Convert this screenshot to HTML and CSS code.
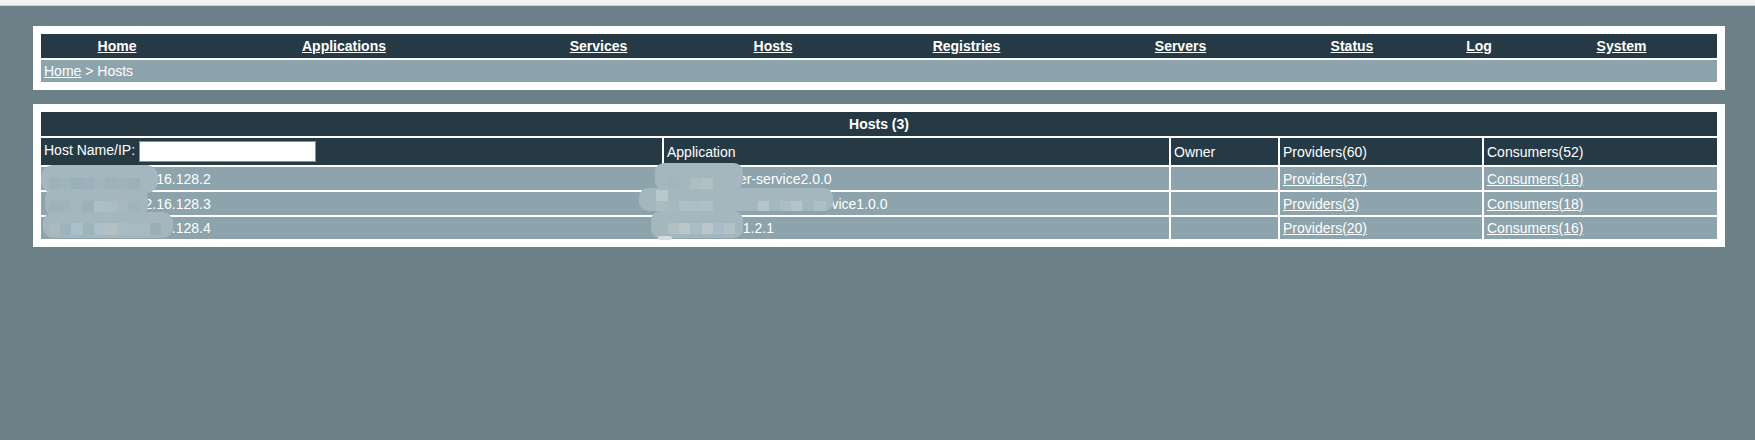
FILE: index.html
```html
<!DOCTYPE html>
<html lang="en">
<head>
<meta charset="utf-8">
<title>Hosts</title>
<link rel="stylesheet" href="styles.css">
</head>
<body>
<div class="topstrip"></div>
<main class="page">
  <section class="panel">
    <table class="frame">
      <tr>
        <td class="nav-cell">
          <table class="nav">
            <tr>
              <td class="n1"><a href="#">Home</a></td>
              <td class="n2"><a href="#">Applications</a></td>
              <td class="n3"><a href="#">Services</a></td>
              <td class="n4"><a href="#">Hosts</a></td>
              <td class="n5"><a href="#">Registries</a></td>
              <td class="n6"><a href="#">Servers</a></td>
              <td class="n7"><a href="#">Status</a></td>
              <td class="n8"><a href="#">Log</a></td>
              <td class="n9"><a href="#">System</a></td>
            </tr>
          </table>
        </td>
      </tr>
      <tr><td class="crumb"><a href="#">Home</a> &gt; Hosts</td></tr>
    </table>
  </section>

  <section class="panel">
    <table class="frame hosts">
      <colgroup>
        <col class="c-host"><col class="c-app"><col class="c-owner"><col class="c-prov"><col class="c-cons">
      </colgroup>
      <tr><th colspan="5" class="title">Hosts (3)</th></tr>
      <tr class="head">
        <td>Host Name/IP: <input class="filter" type="text"></td>
        <td>Application</td>
        <td>Owner</td>
        <td>Providers(60)</td>
        <td>Consumers(52)</td>
      </tr>
      <tr class="row r-a">
        <td><span class="ip">172.16.128.2</span></td>
        <td><span class="app-a">er-service2.0.0</span></td>
        <td></td>
        <td><a href="#">Providers(37)</a></td>
        <td><a href="#">Consumers(18)</a></td>
      </tr>
      <tr class="row r-b">
        <td><span class="ip">172.16.128.3</span></td>
        <td><span class="app-b">service1.0.0</span></td>
        <td></td>
        <td><a href="#">Providers(3)</a></td>
        <td><a href="#">Consumers(18)</a></td>
      </tr>
      <tr class="row r-c">
        <td><span class="ip">172.16.128.4</span></td>
        <td><span class="app-c">e1.2.1</span></td>
        <td></td>
        <td><a href="#">Providers(20)</a></td>
        <td><a href="#">Consumers(16)</a></td>
      </tr>
    </table>
  </section>
</main>

<svg class="redaction" width="1755" height="440" viewBox="0 0 1755 440" aria-hidden="true">
  <g fill="#a4b7be">
    <rect x="41" y="165" width="117" height="28" rx="12"/>
    <rect x="45" y="188" width="103" height="28" rx="10"/>
    <rect x="43" y="212" width="130" height="26" rx="11"/>
    <rect x="655" y="163" width="88" height="27" rx="9"/>
    <rect x="639" y="188" width="194" height="23" rx="9"/>
    <rect x="651" y="211" width="92" height="27" rx="9"/>
    <rect x="658" y="236" width="14" height="4" rx="2" fill="#d3dcdf"/>
  </g>
  <g fill="#9cb1b9">
    <rect x="49" y="178" width="11" height="11"/><rect x="60" y="178" width="11" height="11" fill="#a0b4bb"/>
    <rect x="71" y="178" width="12" height="11" fill="#98b0ba"/><rect x="83" y="178" width="11" height="11"/>
    <rect x="94" y="178" width="11" height="11" fill="#a0b6bf"/><rect x="105" y="178" width="12" height="11"/>
    <rect x="117" y="178" width="11" height="11" fill="#9fb3bb"/><rect x="128" y="178" width="12" height="11" fill="#9bb0b8"/>
    <rect x="49" y="201" width="11" height="11" fill="#a0b2b6"/><rect x="60" y="201" width="11" height="11" fill="#9fb3bb"/>
    <rect x="71" y="201" width="12" height="11" fill="#a2b8c1"/><rect x="83" y="201" width="11" height="11" fill="#9bb0b8"/>
    <rect x="94" y="201" width="11" height="11" fill="#aabfc8"/><rect x="105" y="201" width="12" height="11" fill="#b0bbbe"/>
    <rect x="117" y="201" width="11" height="11" fill="#a6b9c0"/><rect x="128" y="201" width="12" height="11" fill="#a0b3b7"/>
    <rect x="49" y="223" width="11" height="12" fill="#abbabc"/><rect x="60" y="223" width="11" height="12" fill="#9fb3bb"/>
    <rect x="71" y="223" width="12" height="12" fill="#a8c0ca"/><rect x="83" y="223" width="11" height="12" fill="#9eb3ba"/>
    <rect x="94" y="223" width="11" height="12" fill="#acc0c9"/><rect x="105" y="223" width="12" height="12" fill="#b5c0c3"/>
    <rect x="117" y="223" width="11" height="12" fill="#a9bcc3"/><rect x="128" y="223" width="22" height="12" fill="#a7bac1"/>
    <rect x="150" y="223" width="11" height="12" fill="#99afb8"/>
    <rect x="668" y="178" width="11" height="11" fill="#a0b5bc"/><rect x="679" y="178" width="11" height="11" fill="#a3b7be"/>
    <rect x="690" y="178" width="12" height="11" fill="#acbec2"/><rect x="702" y="178" width="11" height="11" fill="#afc1c4"/>
    <rect x="656" y="190" width="12" height="11" fill="#b8c8cc"/>
    <rect x="656" y="201" width="12" height="10" fill="#a8bcc2"/><rect x="668" y="201" width="11" height="10" fill="#a6b9c0"/>
    <rect x="679" y="201" width="11" height="10" fill="#aec0c5"/><rect x="690" y="201" width="12" height="10" fill="#adbfc4"/>
    <rect x="702" y="201" width="11" height="10" fill="#afc1c6"/><rect x="758" y="201" width="11" height="10" fill="#b6c5ca"/>
    <rect x="780" y="201" width="11" height="10" fill="#acbec4"/><rect x="791" y="201" width="11" height="10" fill="#b4c4c8"/>
    <rect x="814" y="201" width="12" height="10" fill="#adbec5"/>
    <rect x="656" y="223" width="12" height="11" fill="#a3b7bf"/><rect x="668" y="223" width="11" height="11" fill="#aebfc5"/>
    <rect x="679" y="223" width="11" height="11" fill="#b8c6ca"/><rect x="690" y="223" width="12" height="11" fill="#a9bcc3"/>
    <rect x="702" y="223" width="11" height="11" fill="#bac7ca"/><rect x="713" y="223" width="11" height="11" fill="#a9bcca"/>
    <rect x="724" y="223" width="11" height="11" fill="#b3c2c7"/>
  </g>
</svg>
</body>
</html>
```

FILE: styles.css
```css
html, body {
  margin: 0;
  padding: 0;
}

body {
  position: relative;
  height: 440px;
  overflow: hidden;
  background: #6c8087;
  color: #fff;
  font-family: "Liberation Sans", Arial, sans-serif;
  font-size: 14px;
}

a {
  color: #fff;
  text-decoration: underline;
}

.topstrip {
  height: 5px;
  background: #f1f1f1;
  border-bottom: 1px solid #c9cdce;
}

.page {
  display: flex;
  flex-direction: column;
  gap: 14px;
  padding: 20px 30px 0 33px;
}

.panel {
  background: #fff;
  padding: 6px;
}

.frame {
  width: 100%;
  border-collapse: separate;
  border-spacing: 2px;
  table-layout: fixed;
}

.frame td,
.frame th {
  padding: 0 3px;
}

.frame .nav-cell {
  padding: 0;
  height: 24px;
  background: #263a46;
}

.nav {
  width: 100%;
  height: 24px;
  border-collapse: collapse;
  table-layout: fixed;
  font-weight: bold;
  text-align: center;
}

.nav td {
  padding: 0;
}

.n1 { width: 152px; }
.n2 { width: 302px; }
.n3 { width: 207px; }
.n4 { width: 142px; }
.n5 { width: 245px; }
.n6 { width: 183px; }
.n7 { width: 160px; }
.n8 { width: 94px; }

.crumb {
  height: 22px;
  background: #8da4ad;
}

.c-host { width: 621px; }
.c-app { width: 505px; }
.c-owner { width: 107px; }
.c-prov { width: 202px; }
.c-cons { width: 233px; }

.title {
  height: 24px;
  background: #263a46;
  font-weight: bold;
  text-align: center;
}

.head td {
  height: 27px;
  background: #263a46;
}

.filter {
  box-sizing: border-box;
  width: 177px;
  height: 21px;
  margin: 0;
  padding: 1px 2px;
  border: 1px solid #8a9196;
  background: #fff;
  vertical-align: middle;
}

.row td {
  background: #8da4ad;
  vertical-align: middle;
}

.r-a td,
.r-b td { height: 23px; }
.r-c td { height: 22px; }

.ip { margin-left: 85px; }
.app-a { margin-left: 72px; }
.app-b { margin-left: 145px; }
.app-c { margin-left: 68px; }

.redaction {
  position: absolute;
  top: 0;
  left: 0;
  pointer-events: none;
}
```
